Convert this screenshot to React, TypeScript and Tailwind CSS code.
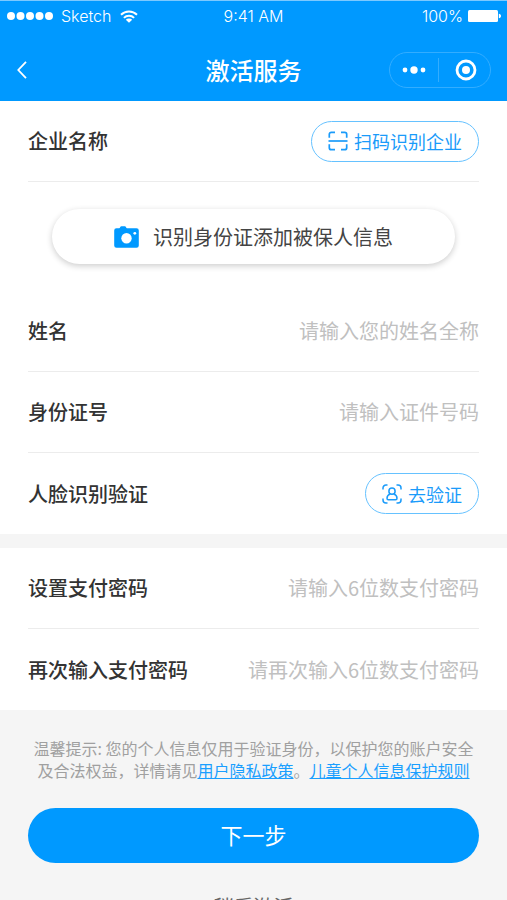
import { useState } from "react";

const label = "shrink-0 text-[20px] leading-[28px] font-medium text-[#333333]";
const pill =
  "flex h-[41px] items-center gap-1.5 rounded-full border border-[#66c2ff] px-4 text-[18px] leading-[24px] text-[#1a9bfa]";

function ScanIcon() {
  return (
    <svg width="20" height="20" viewBox="0 0 20 20" fill="none" stroke="currentColor" strokeWidth="1.7">
      <path d="M1.3 6.8V3.3a2 2 0 0 1 2-2H7M13 1.3h3.700a2 2 0 0 1 2 2v3.500M1.300 13.200v3.500a2 2 0 0 0 2 2H7M13 18.700h3.700a2 2 0 0 0 2-2v-3.500" />
      <path d="M.5 10h19" />
    </svg>
  );
}

function FaceIcon() {
  return (
    <svg width="20" height="20" viewBox="0 0 20 20" fill="none" stroke="currentColor" strokeWidth="1.5">
      <path d="M1 5.5V4a3 3 0 0 1 3-3h1.5M14.5 1H16a3 3 0 0 1 3 3v1.5M1 14.5V16a3 3 0 0 0 3 3h1.5M14.5 19H16a3 3 0 0 0 3-3v-1.5" />
      <circle cx="10" cy="7.2" r="3.1" />
      <path d="M8.2 10c-2 .7-3.2 2.4-3.2 4.3 0 1 .4 1.5 1.3 1.5h7.4c.9 0 1.3-.5 1.3-1.5 0-1.9-1.2-3.6-3.2-4.3" />
    </svg>
  );
}

function CameraIcon() {
  return (
    <svg width="25" height="22" viewBox="0 0 25 22">
      <path
        fill="#0099ff"
        d="M2.500 2.300h2.700C6 2.300 6.200.2 7.400.2h3.400c1.200 0 1.400 2.100 2.200 2.100h9.500a2.300 2.300 0 0 1 2.300 2.300v14.900a2.300 2.300 0 0 1-2.300 2.300h-20a2.300 2.300 0 0 1-2.300-2.300V4.600a2.300 2.300 0 0 1 2.300-2.300Z"
      />
      <circle cx="12.500" cy="12.200" r="5.200" fill="#fff" />
      <circle cx="20.800" cy="7.300" r="1.400" fill="#fff" />
    </svg>
  );
}

function StatusBar() {
  return (
    <div className="grid h-[31px] grid-cols-[1fr_auto_1fr] items-center border-t border-[#7cc9ff] px-1.5 font-['Inter',sans-serif] text-[16px] leading-[20px] font-light">
      <div className="flex items-center gap-2">
        <svg width="47" height="10" viewBox="0 0 47 10" fill="currentColor">
          <circle cx="5" cy="5" r="4" />
          <circle cx="14.5" cy="5" r="4" />
          <circle cx="24" cy="5" r="4" />
          <circle cx="33.5" cy="5" r="4" />
          <circle cx="43" cy="5" r="4" />
        </svg>
        <span>Sketch</span>
        <svg width="20" height="13" viewBox="0 0 20 13" fill="none" stroke="currentColor" strokeWidth="2">
          <path d="M2 4.800a11.500 11.500 0 0 1 16 0M4.900 7.900a7.200 7.200 0 0 1 10.200 0" />
          <path d="M10 12.800 6.800 9.700a4.600 4.600 0 0 1 6.400 0Z" fill="currentColor" stroke="none" />
        </svg>
      </div>
      <span>9:41 AM</span>
      <div className="flex items-center justify-end gap-1">
        <span>100%</span>
        <svg width="34" height="12" viewBox="0 0 34 12" fill="currentColor">
          <rect x="1" y="0" width="30" height="12" rx="1.5" />
          <path d="M31.800 3.700c1.400.3 2.200 1.200 2.200 2.300s-.8 2-2.200 2.300Z" />
        </svg>
      </div>
    </div>
  );
}

function NavBar() {
  return (
    <div className="grid h-[70px] grid-cols-[1fr_auto_1fr] items-center px-4 pt-2">
      <button type="button" aria-label="返回" className="w-5">
        <svg width="12" height="20" viewBox="0 0 12 20" fill="none" stroke="currentColor" strokeWidth="1.8">
          <path d="M10 1.800 2.300 10 10 18.200" />
        </svg>
      </button>
      <h1 className="text-[24px] leading-[32px] font-medium">激活服务</h1>
      <div className="flex h-9 w-[102px] items-center justify-self-end rounded-full border border-[#33adff]">
        <button type="button" aria-label="更多" className="flex flex-1 justify-center">
          <svg width="24" height="8" viewBox="0 0 24 8" fill="currentColor">
            <circle cx="3" cy="4" r="2.400" />
            <circle cx="12" cy="4" r="3.700" />
            <circle cx="21" cy="4" r="2.400" />
          </svg>
        </button>
        <span className="h-6 w-px bg-[#33adff]" />
        <button type="button" aria-label="关闭" className="flex flex-1 justify-center pl-1">
          <svg width="22" height="22" viewBox="0 0 22 22">
            <circle cx="11" cy="11" r="9" fill="none" stroke="currentColor" strokeWidth="2.800" />
            <circle cx="11" cy="11" r="4" fill="currentColor" />
          </svg>
        </button>
      </div>
    </div>
  );
}

type FieldProps = {
  id: string;
  title: string;
  placeholder: string;
  type?: string;
  last?: boolean;
};

function Field({ id, title, placeholder, type = "text", last }: FieldProps) {
  const [value, setValue] = useState("");

  return (
    <div className={`flex h-[81px] items-center gap-4 ${last ? "" : "border-b border-[#ececec]"}`}>
      <label htmlFor={id} className={label}>
        {title}
      </label>
      <input
        id={id}
        type={type}
        value={value}
        onChange={(e) => setValue(e.target.value)}
        placeholder={placeholder}
        className="min-w-0 flex-1 bg-transparent text-right text-[20px] leading-[28px] text-[#333333] outline-none placeholder:text-[#c0c0c0]"
      />
    </div>
  );
}

export default function App() {
  return (
    <div className="min-h-screen bg-[#f5f5f5] pb-4 font-['Noto_Sans_CJK_SC',sans-serif]">
      <header className="bg-[#0099ff] text-white">
        <StatusBar />
        <NavBar />
      </header>

      <form onSubmit={(e) => e.preventDefault()}>
        <section className="bg-white px-7">
          <div className="flex h-[81px] items-center justify-between border-b border-[#ececec]">
            <span className={label}>企业名称</span>
            <button type="button" className={pill}>
              <ScanIcon />
              扫码识别企业
            </button>
          </div>
          <div className="px-6 py-[27px]">
            <button
              type="button"
              className="flex h-[55px] w-full items-center justify-center gap-3.5 rounded-full bg-white text-[20px] leading-[28px] text-[#444444] shadow-[0_2px_6px_rgba(0,0,0,0.2)]"
            >
              <CameraIcon />
              识别身份证添加被保人信息
            </button>
          </div>
          <Field id="name" title="姓名" placeholder="请输入您的姓名全称" />
          <Field id="idcard" title="身份证号" placeholder="请输入证件号码" />
          <div className="flex h-[81px] items-center justify-between">
            <span className={label}>人脸识别验证</span>
            <button type="button" className={pill}>
              <FaceIcon />
              去验证
            </button>
          </div>
        </section>

        <section className="mt-3.5 bg-white px-7">
          <Field id="pwd" type="password" title="设置支付密码" placeholder="请输入6位数支付密码" />
          <Field id="pwd2" type="password" title="再次输入支付密码" placeholder="请再次输入6位数支付密码" last />
        </section>

        <div className="px-7 pt-[27px] text-center">
          <p className="text-[16px] leading-[22px] text-[#a0a0a0]">
            温馨提示: 您的个人信息仅用于验证身份，以保护您的账户安全
            <br />
            及合法权益，详情请见
            <a href="#privacy" className="text-[#1a9fff] underline">用户隐私政策</a>。
            <a href="#children" className="text-[#1a9fff] underline">儿童个人信息保护规则</a>
          </p>
          <button
            type="submit"
            className="mt-[27px] h-[55px] w-full rounded-full bg-[#0099ff] pb-1 text-[22px] leading-[32px] text-white"
          >
            下一步
          </button>
          <button type="button" className="mt-[30px] text-[20px] leading-[28px] text-[#666666]">
            稍后激活
          </button>
        </div>
      </form>
    </div>
  );
}
